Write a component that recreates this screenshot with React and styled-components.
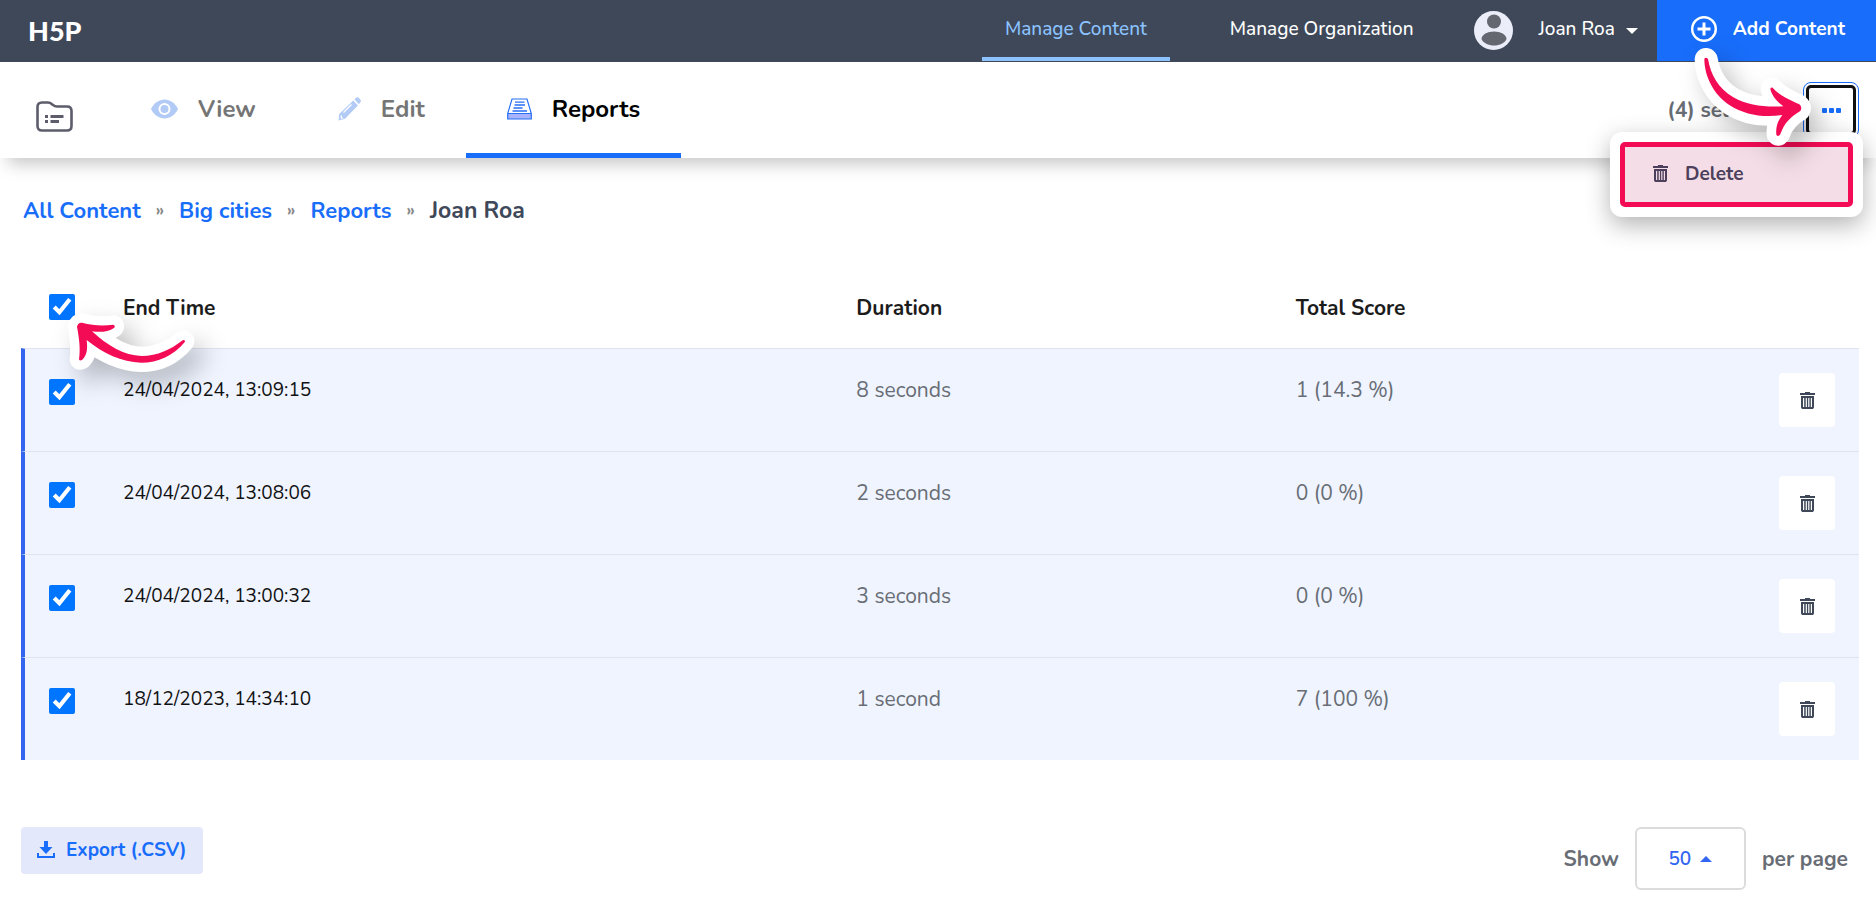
import React, { useState } from "react";
import styled, { createGlobalStyle } from "styled-components";

const colors = {
  navy: "#3e4859",
  blue: "#186dfa",
  lightBlue: "#8cc3ff",
  paleBlue: "#b1caf6",
  rowBlue: "#eff4ff",
  rowBorder: "#dfe3f0",
  pink: "#f40b55",
  grey: "#686d75",
};

const GlobalStyle = createGlobalStyle`
  * {
    box-sizing: border-box;
  }

  body {
    margin: 0;
    background: #fff;
    color: #111;
    font-family: Nunito, Lato, "Open Sans", sans-serif;
    font-size: 21px;
    line-height: 24px;
  }

  button, select, input {
    font: inherit;
    margin: 0;
  }

  svg {
    display: block;
    flex: none;
  }
`;

const Header = styled.header`
  display: flex;
  align-items: stretch;
  height: 62px;
  padding-left: 28px;
  background: ${colors.navy};
  border-bottom: 1px solid ${colors.navy};
  font-size: 19px;
`;

const Logo = styled.a`
  display: flex;
  align-items: center;
  margin-right: auto;
  color: #fff;
  font-family: Lato, sans-serif;
  font-size: 27px;
  font-weight: 900;
  text-decoration: none;
`;

const MainNav = styled.nav`
  display: flex;
  gap: 37px;
  margin-right: 37px;
`;

const NavLink = styled.a`
  display: flex;
  align-items: center;
  justify-content: center;
  padding: 0 23px;
  font-weight: 500;
  text-decoration: none;
  color: ${({ $active }) => ($active ? colors.lightBlue : "#fff")};
  border-bottom: 4px solid ${({ $active }) => ($active ? colors.lightBlue : "transparent")};
`;

const UserButton = styled.button`
  display: flex;
  align-items: center;
  padding: 0 19px 0 0;
  border: 0;
  background: none;
  color: #fff;
  font-weight: 500;
`;

const UserName = styled.span`
  margin: 0 11px 4px 26px;
`;

const AddButton = styled.button`
  display: flex;
  align-items: center;
  gap: 16px;
  padding: 0 31px 4px 34px;
  border: 0;
  background: ${colors.blue};
  color: #fff;
  font-weight: 700;
`;

const Toolbar = styled.div`
  position: relative;
  display: flex;
  height: 96px;
  padding: 0 16px 0 36px;
  background: #fff;
  box-shadow: 0 14px 16px -8px rgba(0, 0, 0, 0.22);
`;

const FolderButton = styled.button`
  display: flex;
  align-items: center;
  padding: 12px 0 0;
  margin-right: 37px;
  border: 0;
  background: none;
`;

const Tab = styled.a`
  display: flex;
  align-items: center;
  gap: 20px;
  padding: 2px 41px 0;
  font-size: 24px;
  line-height: 30px;
  font-weight: 700;
  text-decoration: none;
  color: ${({ $active }) => ($active ? "#000" : "#757575")};
  border-bottom: 5px solid ${({ $active }) => ($active ? colors.blue : "transparent")};
`;

const Selection = styled.div`
  display: flex;
  align-items: center;
  gap: 20px;
  margin-left: auto;
  color: ${colors.grey};
  font-weight: 700;
`;

const MenuAnchor = styled.div`
  position: relative;
  padding: 4px;
`;

const MoreButton = styled.button`
  display: flex;
  align-items: center;
  justify-content: center;
  width: 50px;
  height: 50px;
  padding: 0;
  border: 3px solid #111;
  border-radius: 5px;
  outline: 1px solid ${colors.blue};
  outline-offset: 2px;
  background: #fff;
`;

const Menu = styled.div`
  position: absolute;
  top: 51px;
  right: -3px;
  width: 253px;
  padding: 10px;
  border-radius: 12px;
  background: #fff;
  box-shadow: 0 8px 24px rgba(0, 0, 0, 0.3);
`;

const DeleteItem = styled.button`
  display: flex;
  align-items: center;
  gap: 17px;
  width: 100%;
  height: 65px;
  padding: 0 28px 2px;
  border: 5px solid ${colors.pink};
  border-radius: 5px;
  background: #f4dde6;
  color: #4d405c;
  font-size: 19px;
  font-weight: 700;
`;

const MenuArrowBox = styled.div`
  position: absolute;
  top: -38px;
  right: 46px;
  filter: drop-shadow(10px 12px 12px rgba(0, 0, 0, 0.25));
  pointer-events: none;
`;

const Content = styled.main`
  padding: 39px 17px 14px 21px;
`;

const Breadcrumbs = styled.nav`
  display: flex;
  align-items: center;
  gap: 15px;
  padding-left: 2px;
  font-size: 22px;
  line-height: 28px;
  font-weight: 700;
`;

const Crumb = styled.a`
  color: ${colors.blue};
  text-decoration: none;
`;

const CurrentCrumb = styled.span`
  color: ${colors.navy};
  font-size: 23px;
`;

const Separator = styled.span`
  color: #888;
  font-size: 17px;
`;

const ReportTable = styled.table`
  width: 100%;
  margin-top: 42px;
  table-layout: fixed;
  border-collapse: separate;
  border-spacing: 0;
`;

const HeadCell = styled.th`
  width: ${({ $width }) => $width || "auto"};
  height: 81px;
  padding: 0;
  text-align: left;
  font-weight: 700;
  color: #1c1c1c;
`;

const CheckHead = styled(HeadCell)`
  padding: 0 0 2px 28px;
`;

const CheckCell = styled.td`
  padding: 30px 0 0 24px;
  vertical-align: top;
  border-top: 1px solid ${colors.rowBorder};
  border-left: 4px solid #3366ee;
  background: ${colors.rowBlue};
`;

const Cell = styled.td`
  height: 103px;
  padding: 29px 0 0;
  vertical-align: top;
  border-top: 1px solid ${colors.rowBorder};
  background: ${colors.rowBlue};
  color: ${colors.grey};
  font-weight: 400;
`;

const TimeCell = styled(Cell)`
  color: #111;
  font-size: 19px;
`;

const ActionCell = styled(Cell)`
  padding: 24px 24px 0 0;
`;

const CheckLabel = styled.label`
  position: relative;
  display: block;
  width: 26px;
`;

const Checkbox = styled.input`
  display: block;
  width: 26px;
  height: 26px;
  accent-color: #0075ff;
`;

const CheckArrowBox = styled.div`
  position: absolute;
  top: 19px;
  left: 17px;
  filter: drop-shadow(10px 12px 12px rgba(0, 0, 0, 0.25));
  pointer-events: none;
`;

const TrashButton = styled.button`
  display: flex;
  align-items: center;
  justify-content: center;
  width: 56px;
  height: 54px;
  margin-left: auto;
  padding: 0;
  border: 0;
  border-radius: 4px;
  background: #fff;
  color: ${colors.navy};
`;

const Footer = styled.footer`
  display: flex;
  align-items: flex-start;
  justify-content: space-between;
  margin-top: 67px;
`;

const ExportButton = styled.button`
  display: flex;
  align-items: center;
  gap: 11px;
  height: 47px;
  padding: 0 16px 2px;
  border: 0;
  border-radius: 4px;
  background: #e3e8fb;
  color: ${colors.blue};
  font-size: 19px;
  font-weight: 700;
`;

const PageSize = styled.label`
  display: flex;
  align-items: center;
  gap: 16px;
  padding-right: 11px;
  color: ${colors.grey};
  font-weight: 700;
`;

const SelectBox = styled.span`
  display: flex;
  align-items: center;
  justify-content: center;
  gap: 9px;
  width: 111px;
  height: 63px;
  border: 2px solid #dcdcdc;
  border-radius: 6px;
  color: #3366f0;
  font-size: 19px;
`;

const Select = styled.select`
  appearance: none;
  padding: 0;
  border: 0;
  background: none;
  color: inherit;
  font-weight: 600;
`;

const Avatar = () => (
  <svg width="39" height="39" viewBox="0 0 39 39">
    <circle cx="19.5" cy="19.5" r="19.5" fill="#ebedf9" />
    <circle cx="20" cy="10.5" r="7" fill="#64676f" />
    <path d="M7.5 28c0-4.500 6-7.500 12.500-7.500s12.500 3 12.500 7.500c-1.500 4-7 6.500-12.500 6.500S9 32 7.500 28z" fill="#64676f" />
  </svg>
);

const Caret = ({ up }) => (
  <svg width="12" height="6" viewBox="0 0 12 6" fill="currentColor">
    <path d={up ? "M0 6l6-6 6 6z" : "M0 0h12L6 6z"} />
  </svg>
);

const PlusCircle = () => (
  <svg width="26" height="26" viewBox="0 0 26 26" fill="none" stroke="#fff">
    <circle cx="13" cy="13" r="11.800" strokeWidth="2.400" />
    <path d="M13 6.500v13M6.500 13h13" strokeWidth="3" />
  </svg>
);

const FolderIcon = () => (
  <svg width="37" height="31" viewBox="0 0 37 31" fill="none" stroke="#5c5c6b">
    <path
      d="M1.500 6c0-3 1.500-4.500 4.500-4.500h6c1.800 0 2.800.6 4 1.700l1 .8c1.200 1 2.200 1.500 4 1.500h10c3 0 4.500 1.500 4.500 4.500v15c0 3-1.500 4.500-4.500 4.500H6c-3 0-4.500-1.500-4.500-4.500z"
      strokeWidth="2.600"
    />
    <path d="M9 15.500h3M14.500 15.500h13M9 20.500h3M14.500 20.500h8.500" strokeWidth="2.800" />
  </svg>
);

const EyeIcon = () => (
  <svg width="27" height="20" viewBox="0 0 27 20">
    <path d="M0 10C3 4 8 .5 13.500.5S24 4 27 10c-3 6-8 9.500-13.500 9.500S3 16 0 10z" fill={colors.paleBlue} />
    <circle cx="13.500" cy="10" r="5" fill="none" stroke="#fff" strokeWidth="2" />
  </svg>
);

const PencilIcon = () => (
  <svg width="23" height="24" viewBox="0 0 23 24" fill={colors.paleBlue}>
    <path d="M16.500 2.200l1.300-1.300c1-1 2.200-1 3.200 0l1.200 1.500c1 1 1 2 0 3.200l-1.500 1.600z" />
    <path d="M15.300 3.500l4.600 5L7 21.800.5 23.500 1.200 17z" />
    <path d="M5.500 15.500l8-8" stroke="#fff" strokeWidth="1.200" />
    <path d="M2.500 18l1 .2.700 2.200 1.500.5-2.800 1z" fill="#fff" />
  </svg>
);

const ReportsIcon = () => (
  <svg width="25" height="22" viewBox="0 0 25 22" fill="none" stroke="#276ff5">
    <path d="M1 15h23v6H1z" fill="#a9b3fb" stroke="none" />
    <path d="M5 1h15l4.300 14.500V21H.7v-5.500zM.7 15.500h23.600" strokeWidth="1.200" />
    <path d="M8 4.200h9.500M7.500 7h10.500M6.500 10h9M5.500 13h14.500" strokeWidth="1.300" />
  </svg>
);

const TrashIcon = () => (
  <svg width="15" height="17" viewBox="0 0 15 17" fill="currentColor">
    <path d="M5 0h5v1h5v2H0V1h5z" />
    <path fillRule="evenodd" d="M1 4h13v11.500l-1 1.500H2l-1-1.500zM3 6v9h1.200V6zM5.700 6v9h1.200V6zM8.200 6v9h1.200V6zM10.800 6v9H12V6z" />
  </svg>
);

const DownloadIcon = () => (
  <svg width="18" height="17" viewBox="0 0 18 17" fill="currentColor">
    <path d="M7 0h4v6h4.500L9 13 2.500 6H7z" />
    <path d="M0 12h2v3h14v-3h2v5H0z" />
  </svg>
);

const MenuArrow = () => {
  const shape =
    "M793 176Q798 170 804 177C812 225 835 265 880 292C925 317 975 322 1030 319C1012 306 996 288 991 268Q991 260 998 263C1020 288 1050 299 1078 313Q1088 322 1081 333C1052 350 1032 370 1021 403Q1014 413 1009 404C1007 380 1014 361 1027 345C970 354 915 345 868 315C822 284 793 230 793 176Z";
  return (
    <svg width="124" height="107" viewBox="750 129 372 321">
      <path d={shape} fill="#fff" stroke="#fff" strokeWidth="58" strokeLinejoin="round" />
      <path d={shape} fill={colors.pink} />
    </svg>
  );
};

const CheckArrow = () => {
  const shape =
    "M231 170Q234 157 246 158C279 167 310 168 339 164Q347 166 343 173C324 187 299 187 276 184C321 226 372 257 425 258C473 258 512 239 548 211Q555 207 555 215C520 257 475 278 423 278C365 276 310 251 260 210C263 234 262 255 247 269Q238 274 237 268C242 235 237 203 231 170Z";
  return (
    <svg width="134" height="67" viewBox="198 129 402 201">
      <path d={shape} fill="#fff" stroke="#fff" strokeWidth="56" strokeLinejoin="round" />
      <path d={shape} fill={colors.pink} />
    </svg>
  );
};

const reports = [
  { endTime: "24/04/2024, 13:09:15", duration: "8 seconds", score: "1 (14.3 %)" },
  { endTime: "24/04/2024, 13:08:06", duration: "2 seconds", score: "0 (0 %)" },
  { endTime: "24/04/2024, 13:00:32", duration: "3 seconds", score: "0 (0 %)" },
  { endTime: "18/12/2023, 14:34:10", duration: "1 second", score: "7 (100 %)" },
];

const TopHeader = () => (
  <Header>
    <Logo href="#">H5P</Logo>
    <MainNav>
      <NavLink href="#" $active>Manage Content</NavLink>
      <NavLink href="#">Manage Organization</NavLink>
    </MainNav>
    <UserButton>
      <Avatar />
      <UserName>Joan Roa</UserName>
      <Caret />
    </UserButton>
    <AddButton>
      <PlusCircle />
      Add Content
    </AddButton>
  </Header>
);

const ContentToolbar = ({ count }) => (
  <Toolbar>
    <FolderButton aria-label="Content folder">
      <FolderIcon />
    </FolderButton>
    <Tab href="#"><EyeIcon />View</Tab>
    <Tab href="#"><PencilIcon />Edit</Tab>
    <Tab href="#" $active><ReportsIcon />Reports</Tab>
    <Selection>
      <span>({count}) selected</span>
      <MenuAnchor>
        <MoreButton aria-label="More actions">
          <svg width="19" height="5" viewBox="0 0 19 5" fill={colors.blue}>
            <rect width="5" height="5" rx="1" />
            <rect x="7" width="5" height="5" rx="1" />
            <rect x="14" width="5" height="5" rx="1" />
          </svg>
        </MoreButton>
        <Menu>
          <DeleteItem>
            <TrashIcon />
            Delete
          </DeleteItem>
        </Menu>
        <MenuArrowBox>
          <MenuArrow />
        </MenuArrowBox>
      </MenuAnchor>
    </Selection>
  </Toolbar>
);

const App = () => {
  const [selected, setSelected] = useState(reports.map(() => true));
  const [pageSize, setPageSize] = useState("50");
  const allSelected = selected.every(Boolean);

  const toggle = (idx) => setSelected(selected.map((value, i) => (i === idx ? !value : value)));

  return (
    <>
      <GlobalStyle />
      <TopHeader />
      <ContentToolbar count={selected.filter(Boolean).length} />
      <Content>
        <Breadcrumbs aria-label="Breadcrumb">
          <Crumb href="#">All Content</Crumb>
          <Separator>»</Separator>
          <Crumb href="#">Big cities</Crumb>
          <Separator>»</Separator>
          <Crumb href="#">Reports</Crumb>
          <Separator>»</Separator>
          <CurrentCrumb>Joan Roa</CurrentCrumb>
        </Breadcrumbs>
        <ReportTable>
          <thead>
            <tr>
              <CheckHead $width="102px">
                <CheckLabel>
                  <Checkbox
                    type="checkbox"
                    aria-label="Select all"
                    checked={allSelected}
                    onChange={() => setSelected(reports.map(() => !allSelected))}
                  />
                  <CheckArrowBox>
                    <CheckArrow />
                  </CheckArrowBox>
                </CheckLabel>
              </CheckHead>
              <HeadCell $width="39.9%">End Time</HeadCell>
              <HeadCell $width="23.9%">Duration</HeadCell>
              <HeadCell>Total Score</HeadCell>
              <HeadCell $width="120px" aria-label="Actions" />
            </tr>
          </thead>
          <tbody>
            {reports.map((report, idx) => (
              <tr key={report.endTime}>
                <CheckCell>
                  <CheckLabel>
                    <Checkbox
                      type="checkbox"
                      aria-label={`Select ${report.endTime}`}
                      checked={selected[idx]}
                      onChange={() => toggle(idx)}
                    />
                  </CheckLabel>
                </CheckCell>
                <TimeCell>{report.endTime}</TimeCell>
                <Cell>{report.duration}</Cell>
                <Cell>{report.score}</Cell>
                <ActionCell>
                  <TrashButton aria-label={`Delete ${report.endTime}`}>
                    <TrashIcon />
                  </TrashButton>
                </ActionCell>
              </tr>
            ))}
          </tbody>
        </ReportTable>
        <Footer>
          <ExportButton>
            <DownloadIcon />
            Export (.CSV)
          </ExportButton>
          <PageSize>
            Show
            <SelectBox>
              <Select value={pageSize} onChange={(e) => setPageSize(e.target.value)}>
                <option>10</option>
                <option>25</option>
                <option>50</option>
              </Select>
              <Caret up />
            </SelectBox>
            per page
          </PageSize>
        </Footer>
      </Content>
    </>
  );
};

export default App;
